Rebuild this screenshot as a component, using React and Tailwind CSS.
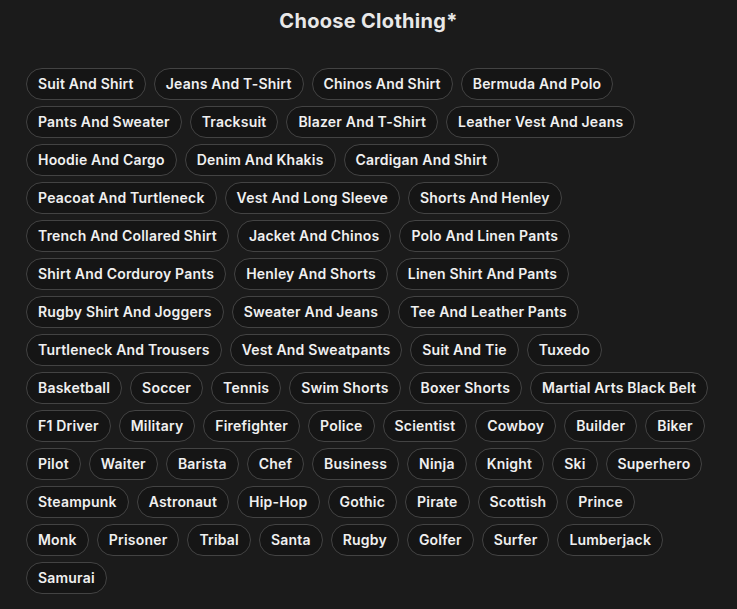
const ROWS = [
  ["Suit And Shirt", "Jeans And T-Shirt", "Chinos And Shirt", "Bermuda And Polo"],
  ["Pants And Sweater", "Tracksuit", "Blazer And T-Shirt", "Leather Vest And Jeans"],
  ["Hoodie And Cargo", "Denim And Khakis", "Cardigan And Shirt"],
  ["Peacoat And Turtleneck", "Vest And Long Sleeve", "Shorts And Henley"],
  ["Trench And Collared Shirt", "Jacket And Chinos", "Polo And Linen Pants"],
  ["Shirt And Corduroy Pants", "Henley And Shorts", "Linen Shirt And Pants"],
  ["Rugby Shirt And Joggers", "Sweater And Jeans", "Tee And Leather Pants"],
  ["Turtleneck And Trousers", "Vest And Sweatpants", "Suit And Tie", "Tuxedo"],
  ["Basketball", "Soccer", "Tennis", "Swim Shorts", "Boxer Shorts", "Martial Arts Black Belt"],
  ["F1 Driver", "Military", "Firefighter", "Police", "Scientist", "Cowboy", "Builder", "Biker"],
  ["Pilot", "Waiter", "Barista", "Chef", "Business", "Ninja", "Knight", "Ski", "Superhero"],
  ["Steampunk", "Astronaut", "Hip-Hop", "Gothic", "Pirate", "Scottish", "Prince"],
  ["Monk", "Prisoner", "Tribal", "Santa", "Rugby", "Golfer", "Surfer", "Lumberjack"],
  ["Samurai"],
];

export default function App() {
  return (
    <div
      className="w-[737px] h-[609px] bg-[#1b1b1b] text-white overflow-hidden"
      style={{ fontFamily: 'Inter, "Liberation Sans", sans-serif' }}
    >
      <h2 className="text-center text-[20px] font-bold tracking-[0.3px] text-[#e8e8e8] pt-[6px] leading-[30px]">
        Choose Clothing*
      </h2>
      <div className="flex flex-col gap-[6px] px-[26px] pt-[32px]">
        {ROWS.map((row, i) => (
          <div key={i} className="flex gap-[8px]">
            {row.map((t) => (
              <button
                key={t}
                className="h-[32px] px-[11px] rounded-full border border-[#434343] bg-[#151515] text-[14px] font-semibold tracking-[0.2px] text-[#f0f0f0] leading-none whitespace-nowrap"
              >
                {t}
              </button>
            ))}
          </div>
        ))}
      </div>
    </div>
  );
}
